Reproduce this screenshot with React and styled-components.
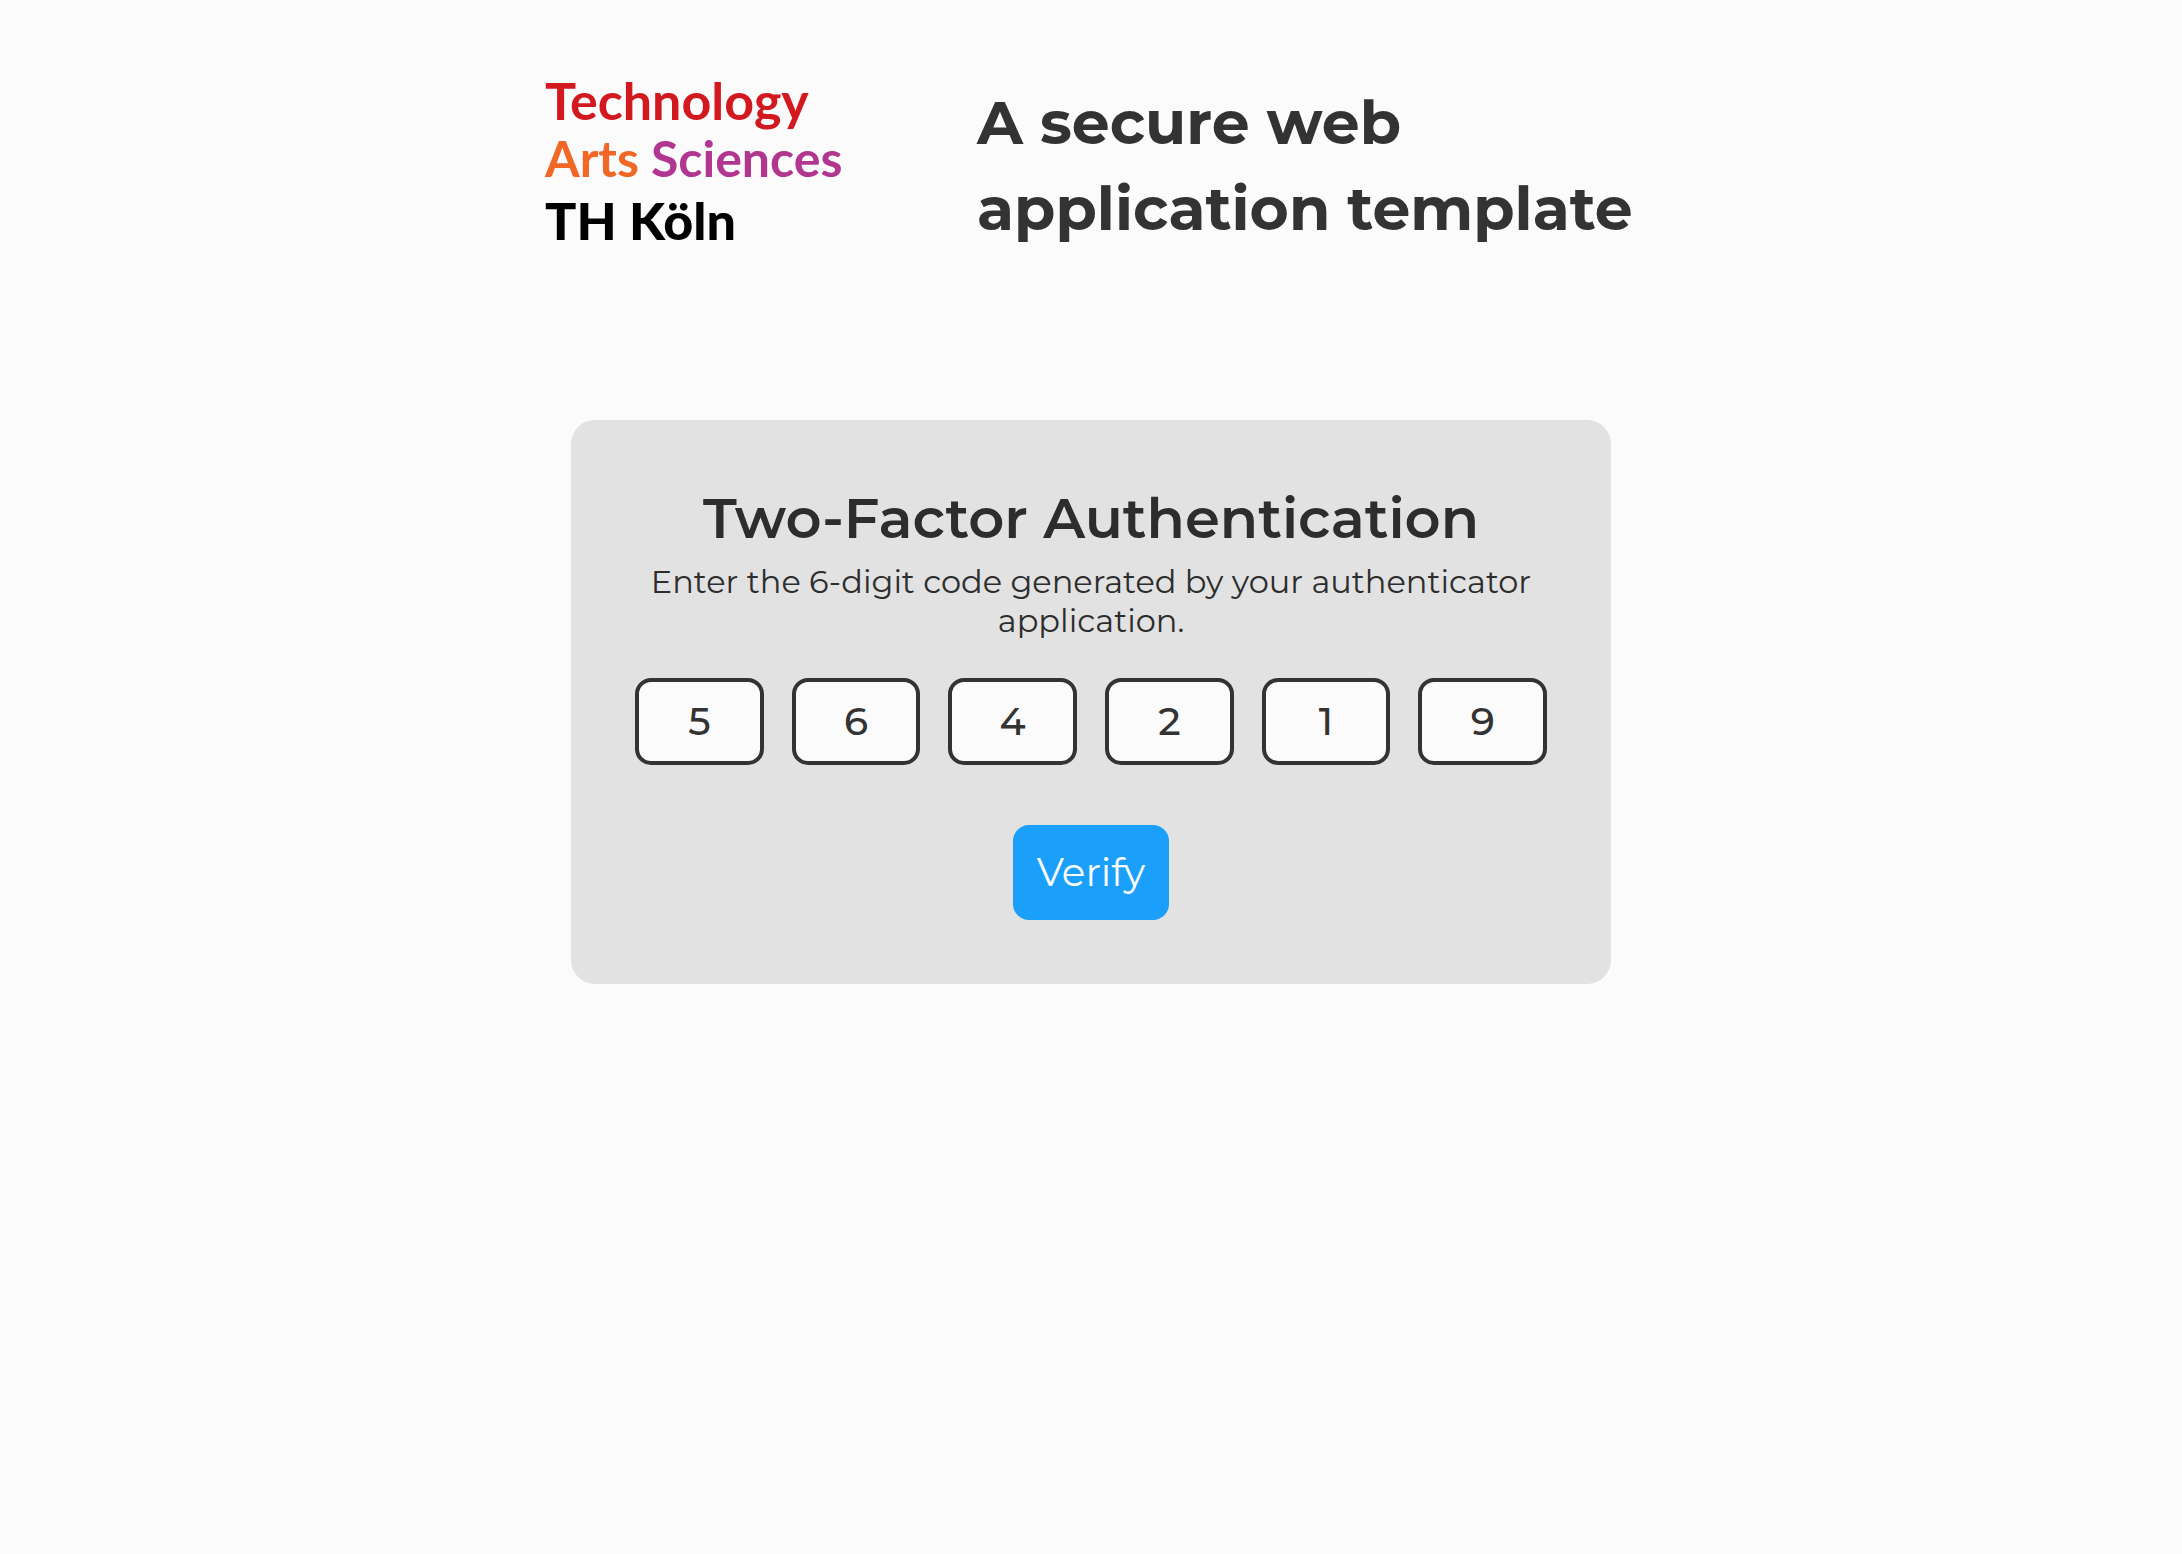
import React, { useRef, useState } from "react";
import styled, { createGlobalStyle } from "styled-components";

const GlobalStyle = createGlobalStyle`
  *, *::before, *::after { box-sizing: border-box; }
  body {
    margin: 0;
    background: #fbfbfb;
    color: #2d2d2d;
    font-family: Montserrat, Inter, "Liberation Sans", sans-serif;
  }
`;

const Page = styled.div`
  display: flex;
  flex-direction: column;
  align-items: center;
  gap: 160px;
  padding: 72px 32px;
`;

const Header = styled.header`
  display: flex;
  align-items: center;
  gap: 128px;
  width: 100%;
  max-width: 1092px;
`;

const Logo = styled.svg`
  flex: none;
  width: 304px;
  height: 188px;
  overflow: visible;
  font-family: Lato, "Open Sans", sans-serif;
`;

const LogoText = styled.text`
  font-size: ${({ $size }) => $size}px;
  font-weight: ${({ $weight = 700 }) => $weight};
`;

const Title = styled.h1`
  flex: 1;
  margin: 0;
  color: #333;
  font-size: 60px;
  font-weight: 700;
  line-height: 86px;
`;

const Card = styled.form`
  display: flex;
  flex-direction: column;
  align-items: center;
  width: 100%;
  max-width: 1040px;
  padding: 64px;
  border-radius: 24px;
  background: #e2e2e2;
`;

const Heading = styled.h2`
  margin: 0;
  font-size: 56px;
  font-weight: 600;
  line-height: 68px;
  text-align: center;
`;

const Hint = styled.p`
  margin: 10px 0 38px;
  font-size: 32px;
  line-height: 39px;
  text-align: center;
`;

const Digits = styled.div`
  display: grid;
  grid-template-columns: repeat(6, 1fr);
  gap: 28px;
  width: 100%;
`;

const Digit = styled.input`
  width: 100%;
  min-width: 0;
  height: 87px;
  padding: 0 0 2px;
  border: 4px solid #333;
  border-radius: 16px;
  background: #fbfbfb;
  color: #333;
  font: inherit;
  font-size: 39px;
  font-weight: 500;
  text-align: center;
`;

const Verify = styled.button`
  margin-top: 60px;
  padding: 23px 24px;
  border: 0;
  border-radius: 16px;
  background: #1aa0fb;
  color: #fbfbfb;
  font: inherit;
  font-size: 39px;
  line-height: 49px;
  cursor: pointer;
`;

export default function App() {
  const [code, setCode] = useState(["5", "6", "4", "2", "1", "9"]);
  const inputs = useRef([]);

  const change = (index, value) => {
    const digit = value.replace(/\D/g, "").slice(-1);
    setCode(code.map((old, i) => (i === index ? digit : old)));
    if (digit && inputs.current[index + 1]) inputs.current[index + 1].focus();
  };

  return (
    <>
      <GlobalStyle />
      <Page>
        <Header>
          <Logo viewBox="0 0 304 188" role="img" aria-label="Technology Arts Sciences TH Köln">
            <LogoText $size={52} x="0" y="48" fill="#d31920">Technology</LogoText>
            <LogoText $size={50} x="0" y="105" fill="#f06726">Arts</LogoText>
            <LogoText $size={50} x="106" y="105" fill="#b1368f">Sciences</LogoText>
            <LogoText $size={52} $weight={900} x="0" y="168" fill="#000">TH Köln</LogoText>
          </Logo>
          <Title>
            A secure web
            <br />
            application template
          </Title>
        </Header>
        <Card onSubmit={(event) => event.preventDefault()}>
          <Heading>Two-Factor Authentication</Heading>
          <Hint>Enter the 6-digit code generated by your authenticator application.</Hint>
          <Digits role="group" aria-label="Authentication code">
            {code.map((digit, i) => (
              <Digit
                key={i}
                ref={(node) => { inputs.current[i] = node; }}
                aria-label={`Digit ${i + 1}`}
                inputMode="numeric"
                value={digit}
                onChange={(event) => change(i, event.target.value)}
              />
            ))}
          </Digits>
          <Verify type="submit">Verify</Verify>
        </Card>
      </Page>
    </>
  );
}
